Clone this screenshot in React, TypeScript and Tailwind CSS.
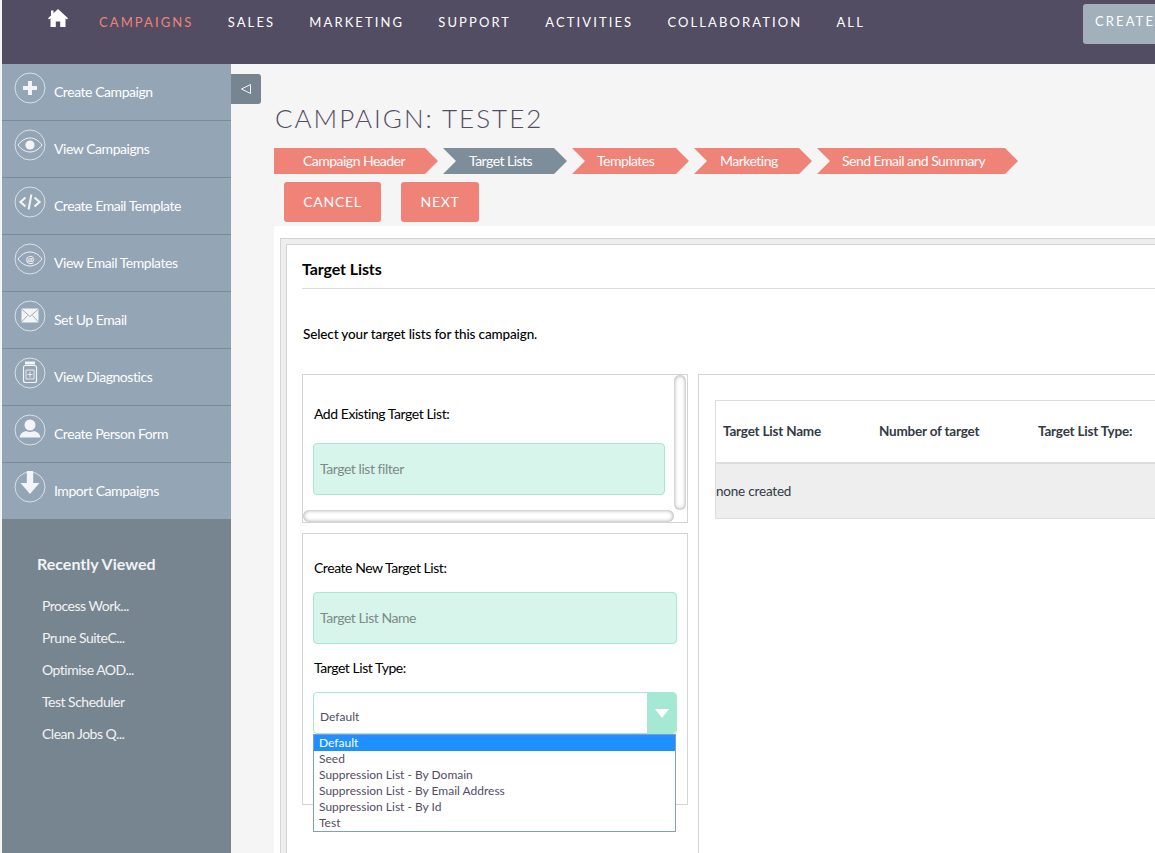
import type { ReactNode } from "react"

function Ring({ children }: { children: ReactNode }) {
  return (
    <svg width="32" height="32" viewBox="0 0 32 32" className="shrink-0 text-[#f3f4f5]" fill="none">
      <circle cx="16" cy="16" r="15" stroke="currentColor" strokeOpacity="0.75" strokeWidth="1" />
      {children}
    </svg>
  )
}

const icons: Record<string, ReactNode> = {
  plus: <path d="M14 9h4v5h5v4h-5v5h-4v-5H9v-4h5z" fill="currentColor" />,
  eye: (
    <>
      <path d="M4 16c3.300-4.600 7.600-7 12-7s8.700 2.400 12 7c-3.300 4.600-7.600 7-12 7S7.300 20.600 4 16z" stroke="currentColor" strokeWidth="1" />
      <circle cx="16" cy="16" r="4.600" fill="currentColor" />
    </>
  ),
  code: (
    <>
      <path d="M11.500 11.500 6.500 16l5 4.500M20.500 11.500l5 4.500-5 4.500" stroke="currentColor" strokeWidth="2.200" />
      <path d="M17.400 8.500 14.600 23.500" stroke="currentColor" strokeWidth="2" />
    </>
  ),
  eyeAt: (
    <>
      <path d="M4 16c3.300-4.600 7.600-7 12-7s8.700 2.400 12 7c-3.300 4.600-7.600 7-12 7S7.300 20.600 4 16z" stroke="currentColor" strokeWidth="1" />
      <text x="16" y="19.500" textAnchor="middle" fontSize="10" fontWeight="700" fill="currentColor" fontFamily="Lato, sans-serif">@</text>
    </>
  ),
  mail: (
    <>
      <path d="M7.500 8.500h17v14h-17z" fill="currentColor" />
      <path d="M7.500 9 16 16.500 24.500 9M7.500 22l6-6.500M24.500 22l-6-6.500" stroke="#94a5b5" strokeWidth="0.900" />
    </>
  ),
  bottle: (
    <>
      <path d="M11 4.500h10v3H11z" fill="currentColor" />
      <path d="M11.500 8.500h9a2 2 0 0 1 2 2v13a2 2 0 0 1-2 2h-9a2 2 0 0 1-2-2v-13a2 2 0 0 1 2-2z" stroke="currentColor" strokeWidth="1.200" />
      <path d="M12 13h8v9h-8zM16 14.500v6M13.500 17.500h5" stroke="currentColor" strokeWidth="0.900" />
    </>
  ),
  person: (
    <>
      <circle cx="16" cy="11" r="5.500" fill="currentColor" />
      <path d="M5.500 23.500c.5-3.500 2.500-5.500 6.500-6.500 2.500 1.200 5.500 1.200 8 0 4 1 6 3 6.500 6.500z" fill="currentColor" />
    </>
  ),
  down: <path d="M12.800 0h6.400v12h6.300L16 23 6.500 12h6.300z" fill="currentColor" />,
}

const actions = [
  { label: "Create Campaign", icon: "plus" },
  { label: "View Campaigns", icon: "eye" },
  { label: "Create Email Template", icon: "code" },
  { label: "View Email Templates", icon: "eyeAt" },
  { label: "Set Up Email", icon: "mail" },
  { label: "View Diagnostics", icon: "bottle" },
  { label: "Create Person Form", icon: "person" },
  { label: "Import Campaigns", icon: "down" },
]

const recent = ["Process Work...", "Prune SuiteC...", "Optimise AOD...", "Test Scheduler", "Clean Jobs Q..."]

const navItems = ["SALES", "MARKETING", "SUPPORT", "ACTIVITIES", "COLLABORATION", "ALL"]

const steps = [
  { label: "Campaign Header", cls: "w-[164px] pl-[29px] bg-[#f08377] [clip-path:polygon(0_0,151px_0,100%_50%,151px_100%,0_100%)]" },
  { label: "Target Lists", cls: "w-[124px] pl-[26px] bg-[#7e8d9a] [clip-path:polygon(0_0,111px_0,100%_50%,111px_100%,0_100%,13px_50%)]" },
  { label: "Templates", cls: "w-[117px] pl-[25px] bg-[#f08377] [clip-path:polygon(0_0,104px_0,100%_50%,104px_100%,0_100%,13px_50%)]" },
  { label: "Marketing", cls: "w-[118px] pl-[26px] bg-[#f08377] [clip-path:polygon(0_0,105px_0,100%_50%,105px_100%,0_100%,13px_50%)]" },
  { label: "Send Email and Summary", cls: "w-[201px] pl-[25px] bg-[#f08377] [clip-path:polygon(0_0,188px_0,100%_50%,188px_100%,0_100%,13px_50%)]" },
]

const listTypes = ["Seed", "Suppression List - By Domain", "Suppression List - By Email Address", "Suppression List - By Id", "Test"]

export default function App() {
  return (
    <div className="w-[1155px] h-[853px] overflow-hidden bg-[#f5f5f5] pl-[2px] font-['Lato',sans-serif] text-[14px] flex flex-col">
      <header className="h-[64px] shrink-0 bg-[#534d64] flex items-start text-[13px] tracking-[2.100px] text-white">
        <svg width="20" height="18" viewBox="0 0 20 18" className="ml-[46px] mt-[9px] shrink-0" fill="#fff">
          <path d="M10 0 20 9.200l-1.100 1.200L17.500 9.200V18h-5.300v-5.600H7.800V18H2.500V9.200l-1.400 1.200L0 9.200 3 6.500V1.500h2.500v2.700z" />
        </svg>
        <nav className="ml-[31px] flex gap-[34.200px] leading-[44px]">
          <a className="text-[#f08377]">CAMPAIGNS</a>
          {navItems.map((item) => (
            <a key={item}>{item}</a>
          ))}
        </nav>
        <button className="ml-auto mt-[4px] w-[72px] h-[40px] shrink-0 rounded-l-[3px] bg-[#a2b0bc] pl-[12px] pb-[4px] text-left whitespace-nowrap overflow-hidden">
          CREATE
        </button>
      </header>

      <div className="flex flex-1 min-h-0">
        <aside className="w-[229px] shrink-0 flex flex-col bg-[#778591] text-white">
          {actions.map((action, i) => (
            <a
              key={action.label}
              className={`bg-[#94a5b5] flex items-start pl-[12px] gap-[8px] pt-[8px] ${i < actions.length - 1 ? "h-[57px] border-b border-[#7b8a98]" : "h-[56px]"}`}
            >
              <Ring>{icons[action.icon]}</Ring>
              <span className="mt-[11px] leading-[18px] tracking-[-0.450px]">{action.label}</span>
            </a>
          ))}
          <div className="pt-[35px] pl-[35px] text-[#f1f3f4]">
            <h3 className="text-[16px] leading-[20px] font-bold">Recently Viewed</h3>
            <ul className="mt-[23px] pl-[5px] flex flex-col gap-[14px]">
              {recent.map((r) => (
                <li key={r} className="leading-[18px] tracking-[-0.500px]">{r}</li>
              ))}
            </ul>
          </div>
        </aside>

        <main className="relative flex-1 min-w-0 pl-[43px] flex flex-col">
          <button className="absolute left-0 top-[10px] w-[30px] h-[30px] bg-[#778591] rounded-r-[3px] flex items-center justify-center">
            <svg width="12" height="12" viewBox="0 0 12 12" fill="none">
              <path d="M10.500 1.500v9L1.500 6z" stroke="#f3f4f5" strokeWidth="1" />
            </svg>
          </button>

          <h1 className="mt-[39px] h-[30px] leading-[30px] pl-[1px] text-[26px] font-light tracking-[2px] text-[#534d64] whitespace-nowrap">
            CAMPAIGN: TESTE2
          </h1>

          <div className="mt-[15px] flex gap-[5px] text-white">
            {steps.map((s) => (
              <div key={s.label} className={`h-[26px] shrink-0 leading-[26px] whitespace-nowrap tracking-[-0.520px] ${s.cls}`}>
                {s.label}
              </div>
            ))}
          </div>

          <div className="mt-[8px] ml-[10px] flex gap-[20px] text-white tracking-[0.700px]">
            <button className="w-[97px] h-[40px] rounded-[3px] bg-[#f08377] pb-[1px]">CANCEL</button>
            <button className="w-[78px] h-[40px] rounded-[3px] bg-[#f08377] pb-[1px]">NEXT</button>
          </div>

          <div className="mt-[4px] flex-1 min-h-0 bg-white pl-[6px] pt-[12px]">
            <div className="w-[1000px] h-[700px] border border-[#d4d4d4] bg-[#eeeeee] pl-[5px] pt-[5px]">
              <div className="h-full border border-[#d4d4d4] bg-white pl-[15px] tracking-[-0.450px]">
                <h2 className="mt-[12px] h-[24px] leading-[24px] text-[16px] font-bold tracking-[-0.100px] text-black">Target Lists</h2>
                <div className="mt-[7px] border-t border-[#dddddd]" />
                <p className="mt-[36px] h-[18px] leading-[18px] pl-[1px] font-medium text-[13.500px] tracking-[-0.130px] text-black">
                  Select your target lists for this campaign.
                </p>

                <div className="mt-[31px] flex gap-[10px]">
                  <div className="w-[386px] shrink-0 flex flex-col gap-[10px]">
                    <div className="relative h-[149px] border border-[#d4d4d4] pl-[10px] pt-[30px]">
                      <label className="block h-[18px] leading-[18px] pl-[1px] text-black">Add Existing Target List:</label>
                      <div className="mt-[20px] w-[352px] h-[52px] rounded-[4px] border border-[#a5e8d3] bg-[#d8f5ec] pl-[6px] leading-[50px] text-[#7e8a86]">
                        Target list filter
                      </div>
                      <span className="absolute right-[1px] top-0 w-[12px] h-[135px] rounded-full bg-white shadow-[inset_0_0_4px_rgba(0,0,0,0.4)]" />
                      <span className="absolute left-0 bottom-0 w-[371px] h-[12px] rounded-full bg-white shadow-[inset_0_0_4px_rgba(0,0,0,0.4)]" />
                    </div>

                    <div className="relative h-[272px] border border-[#d4d4d4] pl-[10px] pt-[25px]">
                      <label className="block h-[18px] leading-[18px] pl-[1px] text-black">Create New Target List:</label>
                      <div className="mt-[15px] w-[364px] h-[52px] rounded-[4px] border border-[#a5e8d3] bg-[#d8f5ec] pl-[6px] leading-[50px] text-[#7e8a86]">
                        Target List Name
                      </div>
                      <label className="mt-[15px] block h-[18px] leading-[18px] pl-[1px] text-black">Target List Type:</label>
                      <div className="mt-[15px] w-[364px] h-[42px] rounded-[4px] border border-[#a5e8d3] bg-white flex overflow-hidden">
                        <span className="flex-1 pl-[6px] pt-[16px] text-[12px] leading-[16px] tracking-normal text-[#534d64]">Default</span>
                        <span className="w-[29px] bg-[#a5e8d3] flex items-center justify-center">
                          <svg width="14" height="9" viewBox="0 0 14 9" fill="#fff">
                            <path d="M0 0h14L7 9z" />
                          </svg>
                        </span>
                      </div>
                      <ul className="absolute left-[10px] top-[200px] w-[363px] h-[98px] border border-[#7f9bd1] bg-white text-[12px] leading-[16px] text-[#534d64] tracking-normal">
                        <li className="bg-[#1e90ff] text-white pl-[5px]">Default</li>
                        {listTypes.map((t) => (
                          <li key={t} className="pl-[5px]">{t}</li>
                        ))}
                      </ul>
                    </div>
                  </div>

                  <div className="flex-1 h-[600px] border border-[#d4d4d4] pl-[16px] pt-[25px]">
                    <div className="w-[600px] border border-[#dddddd] text-[#333a45] tracking-[-0.200px]">
                      <div className="h-[63px] border-b-2 border-[#dddddd] bg-white flex items-center font-bold text-[13.500px]">
                        <span className="w-[163px] pl-[7px]">Target List Name</span>
                        <span className="w-[159px]">Number of target</span>
                        <span>Target List Type:</span>
                      </div>
                      <div className="h-[54px] bg-[#eeeeee] leading-[54px] text-[13.500px]">none created</div>
                    </div>
                  </div>
                </div>
              </div>
            </div>
          </div>
        </main>
      </div>
    </div>
  )
}
